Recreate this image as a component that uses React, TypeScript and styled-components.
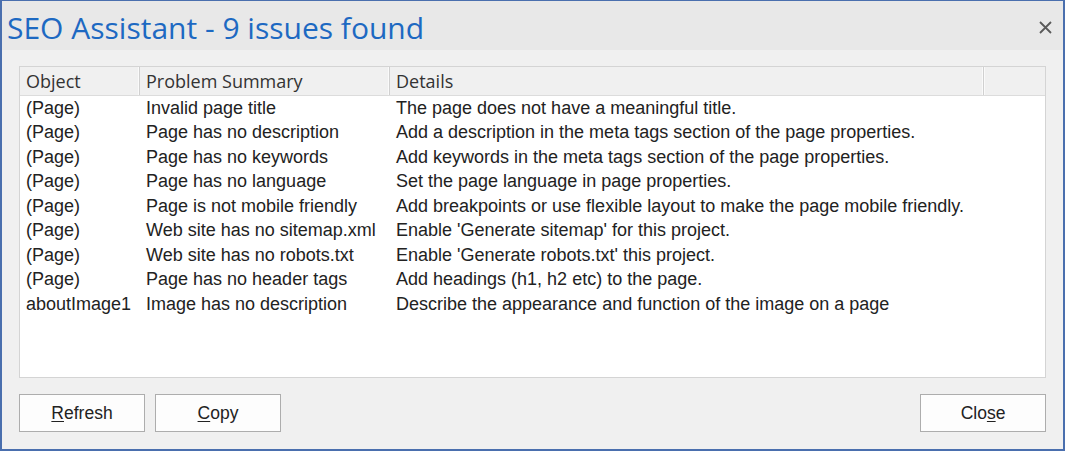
import React from "react";
import styled, { createGlobalStyle } from "styled-components";

const Global = createGlobalStyle`
  html, body { margin: 0; padding: 0; background: #f0f0f0; }
  * { box-sizing: border-box; }
`;

const Window = styled.div`
  width: 1065px;
  height: 451px;
  border: 2px solid #4a6fae;
  border-top-width: 1px;
  background: #f0f0f0;
  display: flex;
  flex-direction: column;
`;

const TitleBar = styled.div`
  height: 49px;
  background: #e8e8e8;
  display: flex;
  align-items: center;
  justify-content: space-between;
  padding: 0 10px 0 5px;
`;

const Title = styled.h1`
  margin: 0;
  font-family: "Open Sans", "Noto Sans", sans-serif;
  font-weight: 400;
  font-size: 30px;
  color: #1d69c2;
  padding-top: 3px;
`;

const CloseX = styled.button`
  border: 0;
  background: none;
  padding: 0;
  width: 16px;
  height: 16px;
  display: flex;
  align-items: center;
  justify-content: center;
  margin-top: 4px;
`;

const Body = styled.div`
  flex: 1;
  display: flex;
  flex-direction: column;
  padding: 16px 17px 17px 17px;
  gap: 16px;
`;

const Table = styled.div`
  height: 312px;
  background: #ffffff;
  border: 1px solid #d4d4d4;
  display: flex;
  flex-direction: column;
`;

const Grid = styled.div`
  display: grid;
  grid-template-columns: 120px 250px 594px 1fr;
`;

const HeaderRow = styled(Grid)`
  height: 29px;
  background: #f0f0f0;
  border-bottom: 1px solid #dcdcdc;
`;

const HeaderCell = styled.div`
  font-family: "Open Sans", "Noto Sans", sans-serif;
  font-size: 18px;
  color: #333;
  padding-left: 6px;
  display: flex;
  align-items: center;
  border-right: 1px solid #d0d0d0;
  box-shadow: inset -1px 0 0 #fafafa;
  white-space: nowrap;
  overflow: hidden;
  &:last-child { border-right: 0; box-shadow: inset 1px 0 0 #fafafa; }
`;

const Row = styled(Grid)`
  height: 24.5px;
`;

const Cell = styled.div`
  font-family: "Liberation Sans", Arial, sans-serif;
  font-size: 18px;
  color: #222;
  padding-left: 6px;
  display: flex;
  align-items: center;
  white-space: nowrap;
`;

const ButtonBar = styled.div`
  display: flex;
  gap: 10px;
`;

const Spacer = styled.div`
  flex: 1;
`;

const Button = styled.button`
  width: 126px;
  height: 38px;
  background: #fdfdfd;
  border: 1px solid #adadad;
  font-family: "Liberation Sans", Arial, sans-serif;
  font-size: 17.5px;
  color: #222;
  padding: 0;
  u { text-decoration: underline; text-underline-offset: 2px; }
`;

const rows: [string, string, string][] = [
  ["(Page)", "Invalid page title", "The page does not have a meaningful title."],
  ["(Page)", "Page has no description", "Add a description in the meta tags section of the page properties."],
  ["(Page)", "Page has no keywords", "Add keywords in the meta tags section of the page properties."],
  ["(Page)", "Page has no language", "Set the page language in page properties."],
  ["(Page)", "Page is not mobile friendly", "Add breakpoints or use flexible layout to make the page mobile friendly."],
  ["(Page)", "Web site has no sitemap.xml", "Enable 'Generate sitemap' for this project."],
  ["(Page)", "Web site has no robots.txt", "Enable 'Generate robots.txt' this project."],
  ["(Page)", "Page has no header tags", "Add headings (h1, h2 etc) to the page."],
  ["aboutImage1", "Image has no description", "Describe the appearance and function of the image on a page"],
];

export default function App() {
  return (
    <>
      <Global />
      <Window>
        <TitleBar>
          <Title>SEO Assistant - 9 issues found</Title>
          <CloseX aria-label="Close">
            <svg width="13" height="13" viewBox="0 0 13 13">
              <path d="M1 1 L12 12 M12 1 L1 12" stroke="#5a5a5a" strokeWidth="1.8" />
            </svg>
          </CloseX>
        </TitleBar>
        <Body>
          <Table>
            <HeaderRow>
              <HeaderCell>Object</HeaderCell>
              <HeaderCell>Problem Summary</HeaderCell>
              <HeaderCell>Details</HeaderCell>
              <HeaderCell />
            </HeaderRow>
            {rows.map((r, i) => (
              <Row key={i}>
                <Cell>{r[0]}</Cell>
                <Cell>{r[1]}</Cell>
                <Cell>{r[2]}</Cell>
                <Cell />
              </Row>
            ))}
          </Table>
          <ButtonBar>
            <Button><u>R</u>efresh</Button>
            <Button><u>C</u>opy</Button>
            <Spacer />
            <Button>Clo<u>s</u>e</Button>
          </ButtonBar>
        </Body>
      </Window>
    </>
  );
}
